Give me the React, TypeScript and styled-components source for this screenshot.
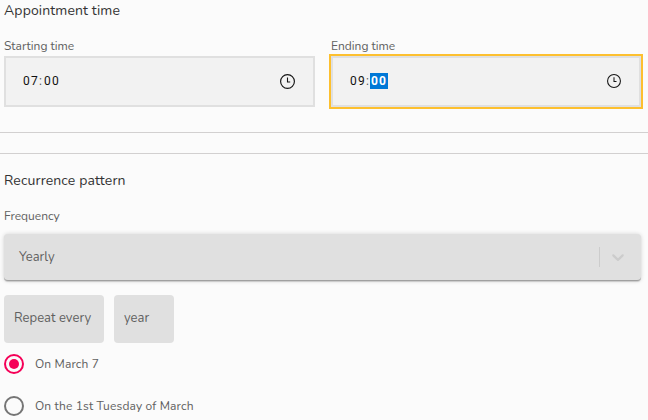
import React from "react";
import styled, { createGlobalStyle } from "styled-components";

const GlobalStyle = createGlobalStyle`
  * { box-sizing: border-box; }
  body {
    margin: 0;
    background: #fbfbfb;
    overflow: hidden;
    font-family: Nunito, Lato, sans-serif;
    color: #606060;
  }
`;

const Page = styled.main`
  width: 648px;
  height: 420px;
  overflow: hidden;
  background: #fbfbfb;
`;

const Section = styled.section<{ $height?: number }>`
  height: ${(p) => (p.$height ? `${p.$height}px` : "auto")};
  padding-left: 4px;
`;

const Title = styled.h2`
  margin: 0;
  height: 20px;
  font-size: 14px;
  line-height: 22px;
  font-weight: 400;
  letter-spacing: 0.13px;
  color: #333;
  white-space: nowrap;
`;

const TimeRow = styled.div`
  display: grid;
  grid-template-columns: 311px 310px;
  column-gap: 16px;
  padding-top: 17px;
`;

const Label = styled.div`
  height: 19px;
  font-size: 12px;
  line-height: 18px;
  white-space: nowrap;
`;

const FrequencyLabel = styled(Label)`
  height: 27px;
  margin-top: 17px;
`;

const TimeBox = styled.div<{ $focused?: boolean }>`
  display: flex;
  align-items: center;
  justify-content: space-between;
  height: 51px;
  padding: 0 18px 1px 16px;
  border: 2px solid #e0e0e0;
  background: #f2f2f2;
  outline: ${(p) => (p.$focused ? "2px solid #fdc02f" : "none")};
`;

const TimeValue = styled.div`
  display: flex;
  height: 16px;
  font-family: Roboto, sans-serif;
  font-size: 12px;
  line-height: 16px;
  letter-spacing: 1.2px;
  color: #111;
`;

const Digits = styled.span<{ $selected?: boolean }>`
  width: ${(p) => (p.$selected ? 18 : 17)}px;
  padding-left: 1px;
  font-weight: ${(p) => (p.$selected ? 700 : 400)};
  color: ${(p) => (p.$selected ? "#fff" : "#111")};
  background: ${(p) => (p.$selected ? "#0078d7" : "transparent")};
`;

const Colon = styled.span`
  width: 4px;
  color: #555;
`;

const Divider = styled.hr<{ $gap: number }>`
  height: 1px;
  margin: 0 0 ${(p) => p.$gap}px;
  border: 0;
  background: #d2d0d0;
`;

const Select = styled.div`
  display: flex;
  align-items: center;
  width: 637px;
  height: 47px;
  padding: 0 13px 0 15px;
  border-bottom: 1px solid #a0a0a0;
  border-radius: 4px;
  background: #e0e0e0;
  box-shadow: 0 0 4px rgba(0, 0, 0, 0.16), 0 1px 1px rgba(0, 0, 0, 0.14);
`;

const Selected = styled.span`
  flex: 1;
  font-size: 13px;
  line-height: 20px;
`;

const Separator = styled.span`
  width: 1px;
  height: 20px;
  margin-right: 8px;
  background: #ccc;
`;

const Interval = styled.div`
  display: flex;
  gap: 10px;
  padding-top: 14px;
`;

const Chip = styled.div<{ $width: number }>`
  width: ${(p) => p.$width}px;
  height: 48px;
  padding: 0 10px;
  border-radius: 4px;
  background: #e0e0e0;
  font-size: 13px;
  line-height: 46px;
  letter-spacing: 0.03px;
  white-space: nowrap;
`;

const Option = styled.div`
  display: flex;
  align-items: center;
  gap: 11px;
  height: 42px;
  font-size: 12px;
  letter-spacing: 0.15px;
  white-space: nowrap;
`;

const Radio = styled.span<{ $checked?: boolean }>`
  display: grid;
  place-items: center;
  width: 20px;
  height: 20px;
  border: 2px solid ${(p) => (p.$checked ? "#f50057" : "#757575")};
  border-radius: 50%;

  &::after {
    content: "";
    width: 10px;
    height: 10px;
    border-radius: 50%;
    background: ${(p) => (p.$checked ? "#f50057" : "transparent")};
  }
`;

function Clock({ size }: { size: number }) {
  return (
    <svg width={size} height={size} viewBox="0 0 15 15" fill="none" stroke="#151515">
      <circle cx="7.5" cy="7.5" r="6.9" strokeWidth="1.15" />
      <path d="M7.5 3.5V8H10.2" strokeWidth="1.1" />
    </svg>
  );
}

function Chevron() {
  return (
    <svg width="20" height="20" viewBox="0 0 20 20" fill="#ccc">
      <path d="M4.516 7.548c0.436-0.446 1.043-0.481 1.576 0l3.908 3.747 3.908-3.747c0.533-0.481 1.141-0.446 1.574 0 0.436 0.445 0.408 1.197 0 1.615-0.406 0.418-4.695 4.502-4.695 4.502-0.217 0.223-0.502 0.335-0.787 0.335s-0.57-0.112-0.789-0.335c0 0-4.287-4.084-4.695-4.502s-0.436-1.17 0-1.615z" />
    </svg>
  );
}

interface TimeFieldProps {
  label: string;
  hours: string;
  minutes: string;
  iconSize: number;
  focused?: boolean;
}

function TimeField({ label, hours, minutes, iconSize, focused }: TimeFieldProps) {
  return (
    <div>
      <Label>{label}</Label>
      <TimeBox $focused={focused}>
        <TimeValue>
          <Digits>{hours}</Digits>
          <Colon>:</Colon>
          <Digits $selected={focused}>{minutes}</Digits>
        </TimeValue>
        <Clock size={iconSize} />
      </TimeBox>
    </div>
  );
}

export default function App() {
  return (
    <Page>
      <GlobalStyle />
      <Section $height={132}>
        <Title>Appointment time</Title>
        <TimeRow>
          <TimeField label="Starting time" hours="07" minutes="00" iconSize={15} />
          <TimeField label="Ending time" hours="09" minutes="00" iconSize={14} focused />
        </TimeRow>
      </Section>
      <Divider $gap={20} />
      <Divider $gap={16} />
      <Section>
        <Title>Recurrence pattern</Title>
        <FrequencyLabel>Frequency</FrequencyLabel>
        <Select>
          <Selected>Yearly</Selected>
          <Separator />
          <Chevron />
        </Select>
        <Interval>
          <Chip $width={100}>Repeat every</Chip>
          <Chip $width={60}>year</Chip>
        </Interval>
        <Option>
          <Radio $checked />
          On March 7
        </Option>
        <Option>
          <Radio />
          On the 1st Tuesday of March
        </Option>
      </Section>
    </Page>
  );
}
